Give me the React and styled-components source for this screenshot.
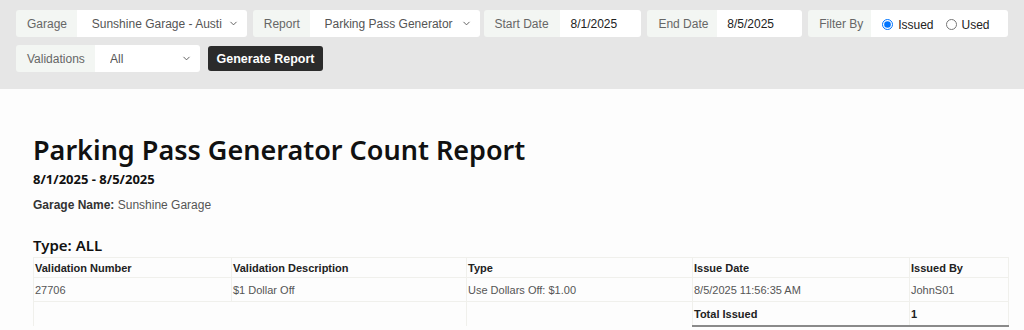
import React from "react";
import styled, { createGlobalStyle } from "styled-components";
import { ChevronDown } from "lucide-react";

const GlobalStyle = createGlobalStyle`
  body {
    margin: 0;
    background: #fdfdfd;
    font-family: "Liberation Sans", Arial, sans-serif;
  }
`;

const Toolbar = styled.div`
  background: #e6e6e6;
  padding: 10px 16px 17px;
  display: flex;
  flex-direction: column;
  gap: 8px;
`;

const ToolRow = styled.div`
  display: flex;
  align-items: center;
  gap: ${(p) => p.gap || 6}px;
`;

const Group = styled.div`
  display: flex;
  height: 27px;
  border-radius: 3px;
  overflow: hidden;
  margin-right: ${(p) => p.mr || 0}px;
`;

const Label = styled.div`
  width: ${(p) => p.w}px;
  box-sizing: border-box;
  background: #f3f6f3;
  color: #666;
  font-size: 12px;
  display: flex;
  align-items: center;
  padding-left: 11px;
`;

const Control = styled.div`
  width: ${(p) => p.w}px;
  box-sizing: border-box;
  background: #fff;
  color: ${(p) => (p.dark ? "#222" : "#555")};
  font-size: 12px;
  display: flex;
  align-items: center;
  padding: 0 8px 0 ${(p) => p.pl || 15}px;
  gap: 6px;
`;

const SelectText = styled.span`
  flex: 1;
  overflow: hidden;
  white-space: nowrap;
`;

const RadioLabel = styled.label`
  display: flex;
  align-items: center;
  gap: 3px;
  margin-right: 6px;
  color: #222;
  font-size: 12px;
  padding-top: 2px;

  input {
    margin: 0 2px 0 0;
    width: 11px;
    height: 11px;
  }
`;

const GenerateButton = styled.button`
  height: 25px;
  width: 115px;
  background: #2b2b2b;
  color: #fff;
  border: none;
  border-radius: 3px;
  font-family: "Liberation Sans", Arial, sans-serif;
  font-weight: bold;
  font-size: 12.5px;
  padding: 0;
`;

const Report = styled.div`
  padding: 44px 16px 0 33px;
`;

const Title = styled.h1`
  font-family: "Noto Sans", sans-serif;
  font-weight: 600;
  font-size: 27px;
  line-height: 34px;
  color: #111;
  margin: 0;
`;

const DateRange = styled.div`
  font-family: "Noto Sans", sans-serif;
  font-weight: 700;
  font-size: 13px;
  color: #111;
  line-height: 16px;
  margin-top: 4px;
`;

const GarageLine = styled.div`
  font-size: 12px;
  color: #555;
  margin-top: 11px;

  b {
    color: #333;
  }
`;

const TypeHeading = styled.h2`
  font-family: "Noto Sans", sans-serif;
  font-weight: 600;
  font-size: 15px;
  color: #111;
  margin: 24px 0 0;
  line-height: 18px;
`;

const Table = styled.table`
  width: 975px;
  border-collapse: collapse;
  table-layout: fixed;
  font-size: 11px;
  margin-top: 3px;
`;

const Th = styled.th`
  text-align: left;
  font-weight: bold;
  color: #222;
  height: 19px;
  padding: 0 1px;
  border: 1px solid #f0f0ec;
`;

const Td = styled.td`
  color: ${(p) => (p.strong ? "#222" : "#555")};
  font-weight: ${(p) => (p.strong ? "bold" : "normal")};
  height: 23px;
  padding: 0 1px;
  border-left: 1px solid #f0f0ec;
  border-right: 1px solid #f0f0ec;
  border-top: 1px solid #f0f0ec;
  border-bottom: ${(p) =>
    p.dashed ? "1px dashed #c4c4c4" : p.total ? "2px solid #8a8a8a" : "none"};
`;

const groups = [
  { label: "Garage", lw: 61, cw: 170, value: "Sunshine Garage - Austin", select: true, mr: 0 },
  { label: "Report", lw: 57, cw: 170, value: "Parking Pass Generator Count Report", select: true, mr: -2 },
  { label: "Start Date", lw: 77, cw: 81, value: "8/1/2025" },
  { label: "End Date", lw: 70, cw: 85, value: "8/5/2025" },
];

const columns = [
  ["Validation Number", 198],
  ["Validation Description", 235],
  ["Type", 226],
  ["Issue Date", 217],
  ["Issued By", 99],
];

const rows = [["27706", "$1 Dollar Off", "Use Dollars Off: $1.00", "8/5/2025 11:56:35 AM", "JohnS01"]];

export default function App() {
  return (
    <>
      <GlobalStyle />
      <Toolbar>
        <ToolRow>
          {groups.map((g) => (
            <Group key={g.label} mr={g.mr}>
              <Label w={g.lw}>{g.label}</Label>
              <Control w={g.cw} dark={!g.select} pl={g.select ? 15 : 10}>
                <SelectText>{g.value}</SelectText>
                {g.select && <ChevronDown size={11} strokeWidth={2} color="#555" />}
              </Control>
            </Group>
          ))}
          <Group>
            <Label w={63}>Filter By</Label>
            <Control w={137} dark pl={11}>
              <RadioLabel>
                <input type="radio" name="filter" defaultChecked /> Issued
              </RadioLabel>
              <RadioLabel>
                <input type="radio" name="filter" /> Used
              </RadioLabel>
            </Control>
          </Group>
        </ToolRow>
        <ToolRow gap={8}>
          <Group>
            <Label w={79}>Validations</Label>
            <Control w={105}>
              <SelectText>All</SelectText>
              <ChevronDown size={11} strokeWidth={2} color="#555" />
            </Control>
          </Group>
          <GenerateButton>Generate Report</GenerateButton>
        </ToolRow>
      </Toolbar>
      <Report>
        <Title>Parking Pass Generator Count Report</Title>
        <DateRange>8/1/2025 - 8/5/2025</DateRange>
        <GarageLine>
          <b>Garage Name:</b> Sunshine Garage
        </GarageLine>
        <TypeHeading>Type: ALL</TypeHeading>
        <Table>
          <colgroup>
            {columns.map(([name, w]) => (
              <col key={name} style={{ width: w }} />
            ))}
          </colgroup>
          <thead>
            <tr>
              {columns.map(([name]) => (
                <Th key={name}>{name}</Th>
              ))}
            </tr>
          </thead>
          <tbody>
            {rows.map((r) => (
              <tr key={r[0]}>
                {r.map((c, i) => (
                  <Td key={i} dashed>
                    {c}
                  </Td>
                ))}
              </tr>
            ))}
            <tr>
              <Td colSpan={2} />
              <Td />
              <Td strong total>Total Issued</Td>
              <Td strong total>1</Td>
            </tr>
          </tbody>
        </Table>
      </Report>
    </>
  );
}
